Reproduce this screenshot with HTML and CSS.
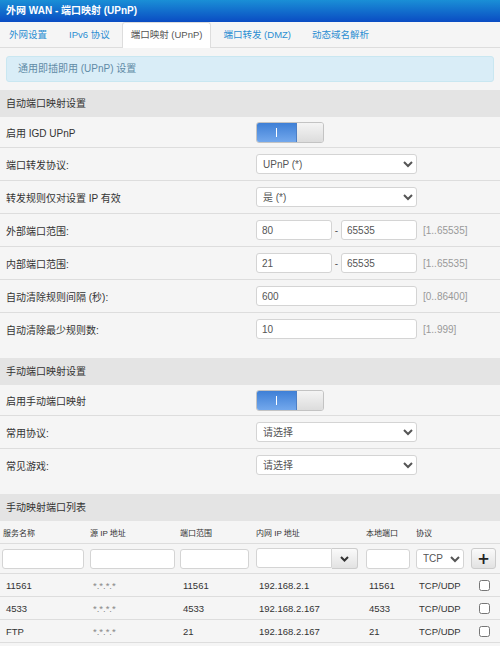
FILE: index.html
```html
<!DOCTYPE html>
<html lang="zh-CN">
<head>
  <meta charset="UTF-8">
  <meta name="viewport" content="width=device-width, initial-scale=1.0">
  <title>外网 WAN - 端口映射 (UPnP)</title>
  <link rel="stylesheet" href="styles.css">
</head>
<body>
  <div class="titlebar">外网 WAN - 端口映射 (UPnP)</div>

  <div class="tabs">
    <a class="tab" href="#">外网设置</a>
    <a class="tab" href="#">IPv6 协议</a>
    <a class="tab active" href="#">端口映射 (UPnP)</a>
    <a class="tab" href="#">端口转发 (DMZ)</a>
    <a class="tab" href="#">动态域名解析</a>
  </div>

  <div class="alert">通用即插即用 (UPnP) 设置</div>

  <!-- 自动端口映射 -->
  <div class="section">
    <div class="section-title">自动端口映射设置</div>
    <div class="row row-first">
      <div class="label">启用 IGD UPnP</div>
      <div class="control">
        <div class="toggle"><span class="toggle-on"><i></i></span><span class="toggle-off"></span></div>
      </div>
    </div>
    <div class="row">
      <div class="label">端口转发协议:</div>
      <div class="control">
        <select class="field wide">
          <option>UPnP (*)</option>
        </select>
      </div>
    </div>
    <div class="row">
      <div class="label">转发规则仅对设置 IP 有效</div>
      <div class="control">
        <select class="field wide">
          <option>是 (*)</option>
        </select>
      </div>
    </div>
    <div class="row">
      <div class="label">外部端口范围:</div>
      <div class="control">
        <input class="field half" type="text" value="80">
        <span class="dash">-</span>
        <input class="field half" type="text" value="65535">
        <span class="hint">[1..65535]</span>
      </div>
    </div>
    <div class="row">
      <div class="label">内部端口范围:</div>
      <div class="control">
        <input class="field half" type="text" value="21">
        <span class="dash">-</span>
        <input class="field half" type="text" value="65535">
        <span class="hint">[1..65535]</span>
      </div>
    </div>
    <div class="row">
      <div class="label">自动清除规则间隔 (秒):</div>
      <div class="control">
        <input class="field wide" type="text" value="600">
        <span class="hint">[0..86400]</span>
      </div>
    </div>
    <div class="row row-last">
      <div class="label">自动清除最少规则数:</div>
      <div class="control">
        <input class="field wide" type="text" value="10">
        <span class="hint">[1..999]</span>
      </div>
    </div>
  </div>

  <!-- 手动端口映射 -->
  <div class="section">
    <div class="section-title">手动端口映射设置</div>
    <div class="row row-first">
      <div class="label">启用手动端口映射</div>
      <div class="control">
        <div class="toggle"><span class="toggle-on"><i></i></span><span class="toggle-off"></span></div>
      </div>
    </div>
    <div class="row">
      <div class="label">常用协议:</div>
      <div class="control">
        <select class="field wide">
          <option>请选择</option>
        </select>
      </div>
    </div>
    <div class="row row-last">
      <div class="label">常见游戏:</div>
      <div class="control">
        <select class="field wide">
          <option>请选择</option>
        </select>
      </div>
    </div>
  </div>

  <!-- 列表 -->
  <div class="section-title">手动映射端口列表</div>
  <div class="list">
    <div class="list-row list-head">
      <div>服务名称</div>
      <div>源 IP 地址</div>
      <div>端口范围</div>
      <div>内网 IP 地址</div>
      <div>本地端口</div>
      <div>协议</div>
      <div></div>
    </div>
    <div class="list-row list-inputs">
      <div><input class="field cell" type="text"></div>
      <div><input class="field cell" type="text"></div>
      <div><input class="field cell" type="text"></div>
      <div class="input-group">
        <input class="field cell" type="text">
        <button class="btn drop" type="button">
          <svg width="9" height="6" viewBox="0 0 9 6"><path d="M1 1l3.5 3.5L8 1" fill="none" stroke="#333" stroke-width="2"/></svg>
        </button>
      </div>
      <div><input class="field cell" type="text"></div>
      <div>
        <select class="field cell">
          <option>TCP</option>
        </select>
      </div>
      <div><button class="btn add" type="button">+</button></div>
    </div>
    <div class="list-row list-data">
      <div>11561</div>
      <div class="muted">*.*.*.*</div>
      <div>11561</div>
      <div>192.168.2.1</div>
      <div>11561</div>
      <div>TCP/UDP</div>
      <div><input type="checkbox"></div>
    </div>
    <div class="list-row list-data">
      <div>4533</div>
      <div class="muted">*.*.*.*</div>
      <div>4533</div>
      <div>192.168.2.167</div>
      <div>4533</div>
      <div>TCP/UDP</div>
      <div><input type="checkbox"></div>
    </div>
    <div class="list-row list-data">
      <div>FTP</div>
      <div class="muted">*.*.*.*</div>
      <div>21</div>
      <div>192.168.2.167</div>
      <div>21</div>
      <div>TCP/UDP</div>
      <div><input type="checkbox"></div>
    </div>
  </div>
</body>
</html>
```

FILE: styles.css
```css
html, body {
  overflow: hidden;
}

body {
  margin: 0;
  padding: 0;
  background-color: #f5f5f5;
  font-family: 'Liberation Sans', Arial, 'Noto Sans CJK SC', sans-serif;
  font-size: 10px;
  color: #333;
}

.titlebar {
  height: 22px;
  line-height: 22px;
  padding-left: 6px;
  background: linear-gradient(to bottom, #1a8fd6, #0a4cc3);
  color: #fff;
  font-weight: bold;
}

.tabs {
  display: flex;
  align-items: flex-end;
  height: 25px;
  border-bottom: 1px solid #ddd;
  background-color: #f5f5f5;
}

.tab {
  display: block;
  height: 24px;
  line-height: 24px;
  padding: 0 8px;
  margin-right: 3px;
  font-size: 9.5px;
  color: #2b8ed2;
  text-decoration: none;
  border: 1px solid transparent;
  border-bottom: none;
  border-radius: 3px 3px 0 0;
}

.tab:first-child {
  margin-right: 4px;
}

.tab.active {
  background-color: #fff;
  border-color: #ddd;
  color: #555;
  margin-bottom: -1px;
  height: 25px;
}

.alert {
  margin: 8px 6px;
  height: 24px;
  line-height: 24px;
  padding-left: 11px;
  background-color: #d9edf7;
  border: 1px solid #c9e7f1;
  border-radius: 3px;
  color: #5f8aa6;
}

.section {
  margin-bottom: 13px;
}

.section-title {
  height: 27px;
  line-height: 27px;
  padding-left: 6px;
  background-color: #e4e4e4;
}

.row {
  display: flex;
  align-items: center;
  height: 32px;
  border-bottom: 1px solid #ddd;
}

.row-first {
  height: 30px;
}

.row-last {
  border-bottom: none;
}

.label {
  width: 250px;
  padding-left: 6px;
}

.control {
  display: flex;
  align-items: center;
}

.field {
  box-sizing: border-box;
  height: 20px;
  padding: 0 5px;
  border: 1px solid #d4d4d4;
  border-radius: 3px;
  background-color: #fff;
  font-family: inherit;
  font-size: 10px;
  color: #555;
  outline: none;
}

select.field {
  padding: 0 2px;
}

.wide {
  width: 161px;
}

.half {
  width: 76px;
}

.dash {
  width: 9px;
  text-align: center;
  color: #555;
}

.hint {
  margin-left: 6px;
  color: #999;
}

.toggle {
  display: flex;
  width: 68px;
  height: 21px;
  box-sizing: border-box;
  border: 1px solid #c3c3c3;
  border-radius: 3px;
  overflow: hidden;
}

.toggle-on {
  display: flex;
  align-items: center;
  justify-content: center;
  width: 39px;
  background: linear-gradient(to bottom, #3e7fd6, #73a8ec);
  border-right: 1px solid #4d7fc5;
}

.toggle-on i {
  display: block;
  width: 1.5px;
  height: 9px;
  background-color: #fff;
}

.toggle-off {
  flex: 1;
  background: linear-gradient(to bottom, #f4f4f4, #dcdcdc);
}

.list-row {
  display: grid;
  grid-template-columns: 87px 90px 76px 110px 50px 54px 33px;
  align-items: center;
  border-bottom: 1px solid #ddd;
}

.list-head {
  height: 22px;
  font-size: 8px;
}

.list-head div {
  padding-left: 3px;
}

.list-inputs {
  height: 29px;
}

.list-inputs > div {
  display: flex;
  padding-left: 2px;
}

.list-inputs > div:nth-child(2),
.list-inputs > div:nth-child(3),
.list-inputs > div:nth-child(4),
.list-inputs > div:nth-child(5),
.list-inputs > div:nth-child(6) {
  padding-left: 3px;
}

.cell {
  width: 82px;
}

.list-inputs > div:nth-child(2) .cell { width: 85px; }
.list-inputs > div:nth-child(3) .cell { width: 69px; }
.list-inputs > div:nth-child(5) .cell { width: 44px; }
.list-inputs > div:nth-child(6) .cell { width: 48px; }

.input-group .cell {
  width: 76px;
  border-radius: 3px 0 0 3px;
}

.btn {
  box-sizing: border-box;
  height: 21px;
  border: 1px solid #ccc;
  background: linear-gradient(to bottom, #fafafa, #e2e2e2);
  padding: 0;
  cursor: pointer;
}

.drop {
  width: 26px;
  border-left: none;
  border-radius: 0 3px 3px 0;
  display: flex;
  align-items: center;
  justify-content: center;
}

.add {
  width: 25px;
  margin-left: 2px;
  border-radius: 3px;
  font-family: 'DejaVu Sans', sans-serif;
  font-size: 15px;
  font-weight: bold;
  line-height: 18px;
  color: #222;
}

.list-data {
  height: 22px;
  font-size: 9.5px;
}

.list-data div {
  padding-left: 6px;
}

.list-data .muted {
  color: #888;
}

.list-data input[type="checkbox"] {
  margin: 0 0 0 6px;
  width: 11px;
  height: 11px;
  vertical-align: middle;
}
```
